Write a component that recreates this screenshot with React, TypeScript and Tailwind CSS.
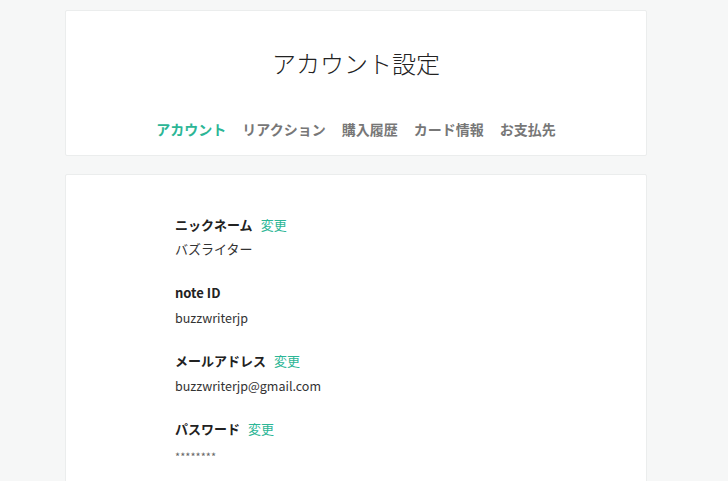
import React from 'react';

const font = { fontFamily: '"Noto Sans CJK JP", "Noto Sans", sans-serif' };

const App: React.FC = () => {
  const tabs = ['アカウント', 'リアクション', '購入履歴', 'カード情報', 'お支払先'];
  const fields = [
    { label: 'ニックネーム', value: 'バズライター', edit: true },
    { label: 'note ID', value: 'buzzwriterjp', edit: false },
    { label: 'メールアドレス', value: 'buzzwriterjp@gmail.com', edit: true },
    { label: 'パスワード', value: '********', edit: true },
  ];

  const valueClass = (i: number) => {
    if (i === 0) return 'mt-[2px] text-[13px] leading-[20px] text-[#333]';
    if (i === 3) return 'mt-[5px] text-[11px] leading-[20px] text-[#666]';
    return 'mt-[3px] text-[12.5px] leading-[20px] text-[#333]';
  };

  return (
    <div className="min-h-[481px] bg-[#f6f7f7] pt-[10px]" style={font}>
      <div className="ml-[65px] w-[582px]">
        <div className="h-[146px] bg-white border border-[#ebeded] rounded-[2px]">
          <h1 className="pt-[34px] text-center text-[24px] leading-[36px] font-light text-[#222]">
            アカウント設定
          </h1>
          <div className="mt-[38px] flex justify-center gap-[16px] text-[14px] leading-[20px] font-bold">
            {tabs.map((t, i) => (
              <span key={i} className={i === 0 ? 'text-[#2cb696]' : 'text-[#777]'}>
                {t}
              </span>
            ))}
          </div>
        </div>

        <div className="mt-[18px] h-[320px] bg-white border border-[#ebeded] rounded-[2px]">
          <div className="pl-[109px] pt-[40px]">
            {fields.map((f, i) => (
              <div key={i} className="mb-[24px] h-[44px]">
                <div className="flex items-baseline h-[22px]">
                  <span className="text-[13px] font-bold text-[#222]">{f.label}</span>
                  {f.edit && <span className="ml-[8px] text-[13px] text-[#2cb696]">変更</span>}
                </div>
                <div className={valueClass(i)}>{f.value}</div>
              </div>
            ))}
          </div>
        </div>
      </div>
    </div>
  );
};

export default App;
